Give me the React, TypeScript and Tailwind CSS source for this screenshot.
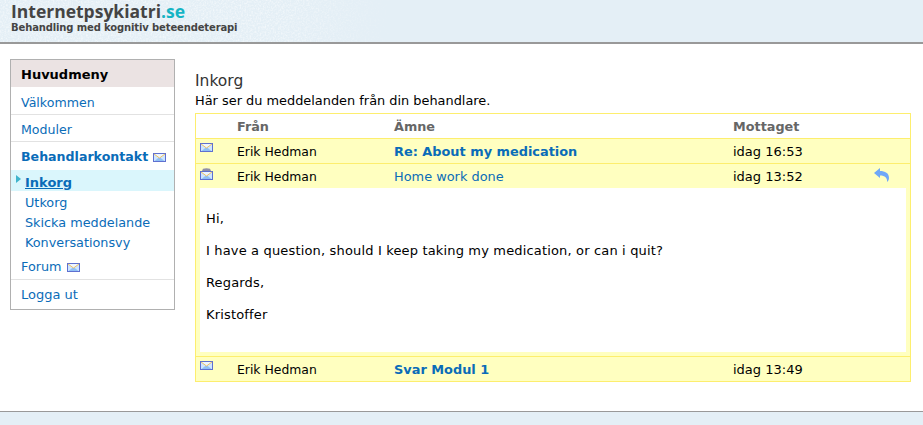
const font = { fontFamily: '"DejaVu Sans", Verdana, sans-serif' };
const linkColor = "text-[#0a6cb8]";

function Envelope({ opened }: { opened?: boolean }) {
  return (
    <svg width="13" height={opened ? 12 : 9} viewBox={opened ? "0 0 13 12" : "0 3 13 9"} className="block">
      {opened && <path d="M1.5 4 L3 0.8 Q6.5 -0.5 10 0.8 L11.5 4 Z" fill="#8f8fa8" />}
      <rect x="0.5" y="3.5" width="12" height="8" fill="#cfe6ff" stroke="#5f70d0" />
      <path d="M1.5 11 L6.5 7 L11.5 11 Z" fill="#8fc0f6" />
      <path d="M1 4 L6.5 8 L12 4" fill="#eef6ff" stroke="#f0bc50" strokeWidth="0.9" />
    </svg>
  );
}

function MailIcon() {
  return (
    <span className="ml-[5px] inline-block align-[-1px]">
      <Envelope />
    </span>
  );
}

function ReplyIcon() {
  return (
    <svg width="15" height="14" viewBox="0 0 15 14" className="-mt-[5px]">
      <path d="M0 5 L6 0 V3 C11 3 15 5 15 10 C15 12 14 13 13 14 C13.5 10 11 7.5 6 7.5 V10 Z" fill="#6fa8f8" />
    </svg>
  );
}

function SubLink({ children }: { children: React.ReactNode }) {
  return <div className={`h-[20px] pl-[14px] text-[12.8px] leading-[24px] ${linkColor}`}>{children}</div>;
}

function Row({ subject, time, bold, opened, reply }: { subject: string; time: string; bold?: boolean; opened?: boolean; reply?: boolean }) {
  return (
    <div className="grid h-[24px] grid-cols-[41px_157px_339px_1fr] bg-[#ffffc0] text-[13px] leading-[26px] text-black">
      <div className="pl-[4px] pt-[4px]">
        <Envelope opened={opened} />
      </div>
      <div className="text-[12.4px]">Erik Hedman</div>
      <div className={`text-[12.9px] ${linkColor} ${bold ? "font-bold" : ""}`}>{subject}</div>
      <div className="flex items-center justify-between pr-[21px]">
        <span>{time}</span>
        {reply && <ReplyIcon />}
      </div>
    </div>
  );
}

export default function App() {
  return (
    <div className="flex h-[425px] w-[923px] flex-col overflow-hidden bg-white" style={font}>
      {/* top banner */}
      <header className="relative h-[44px] border-b-[2px] border-[#999999] bg-[#e4eff6] pl-[11px]">
        <svg className="absolute left-0 top-0" width="400" height="42">
          <defs>
            <filter id="speckle">
              <feTurbulence type="fractalNoise" baseFrequency="0.6" numOctaves="2" seed="4" />
              <feColorMatrix values="0 0 0 0 1  0 0 0 0 1  0 0 0 0 1  2.2 0 0 0 -0.85" />
            </filter>
            <linearGradient id="fade">
              <stop offset="0%" stopColor="#fff" />
              <stop offset="70%" stopColor="#fff" />
              <stop offset="100%" stopColor="#000" />
            </linearGradient>
            <mask id="fadeMask">
              <rect width="400" height="42" fill="url(#fade)" />
            </mask>
          </defs>
          <g mask="url(#fadeMask)">
            <rect width="400" height="42" filter="url(#speckle)" opacity="0.55" />
          </g>
        </svg>
        <div className="relative">
          <div className="h-[22px] text-[17.5px] font-bold leading-[22px] text-[#444444]" style={{ fontFamily: '"Open Sans", sans-serif' }}>
            Internetpsykiatri<span className="text-[#16b4c4]">.se</span>
          </div>
          <div className="text-[10px] font-bold leading-[12px] tracking-[-0.13px] text-[#444444]">Behandling med kognitiv beteendeterapi</div>
        </div>
      </header>

      <main className="flex flex-1 items-start">
        {/* main menu */}
        <nav className="ml-[10px] mt-[15px] w-[165px] border border-[#b0b0b0]">
          <div className="h-[27px] bg-[#ebe3e3] pl-[10px] text-[13px] font-bold leading-[29px] text-black">Huvudmeny</div>
          <div className={`h-[28px] border-b border-[#e2e2e2] pl-[10px] text-[12.6px] leading-[32px] ${linkColor}`}>Välkommen</div>
          <div className={`h-[27px] border-b border-[#e2e2e2] pl-[10px] text-[12.6px] leading-[30px] ${linkColor}`}>Moduler</div>
          <div className={`h-[28px] pl-[10px] text-[12.6px] font-bold leading-[30px] ${linkColor}`}>
            Behandlarkontakt
            <MailIcon />
          </div>
          <div className={`relative h-[21px] bg-[#daf6fc] pl-[14px] text-[13px] font-bold leading-[26px] ${linkColor} underline`}>
            <span className="absolute left-[5px] top-[5px] h-0 w-0 border-y-[4px] border-l-[5px] border-y-transparent border-l-[#3fb4cc]" />
            Inkorg
          </div>
          <SubLink>Utkorg</SubLink>
          <SubLink>Skicka meddelande</SubLink>
          <SubLink>Konversationsvy</SubLink>
          <div className={`h-[29px] border-b border-[#e2e2e2] pl-[10px] text-[12.8px] leading-[32px] ${linkColor}`}>
            Forum
            <MailIcon />
          </div>
          <div className={`h-[29px] pl-[10px] text-[13px] leading-[29px] ${linkColor}`}>Logga ut</div>
        </nav>

        {/* inbox */}
        <section className="ml-[20px] mt-[27px] w-[716px]">
          <h1 className="text-[15.5px] font-normal leading-[20px] text-[#333333]">Inkorg</h1>
          <p className="mt-[1px] h-[21px] text-[12.9px] leading-[18px] text-black">Här ser du meddelanden från din behandlare.</p>
          <div className="border border-[#fdee6e]">
            <div className="grid h-[24px] grid-cols-[41px_157px_339px_1fr] text-[12.8px] font-bold leading-[26px] text-[#666666]">
              <div />
              <div>Från</div>
              <div>Ämne</div>
              <div>Mottaget</div>
            </div>
            <div className="border-t border-[#fdee6e]">
              <Row subject="Re: About my medication" time="idag 16:53" bold />
            </div>
            <div className="border-t border-[#fdee6e]">
              <Row subject="Home work done" time="idag 13:52" opened reply />
            </div>
            <div className="bg-[#ffffc0] px-[4px] pb-[4px]">
              <div className="h-[164px] bg-white py-[22px] pl-[6px] text-[13px] leading-[18px] tracking-[0.16px] text-black">
                <p>Hi,</p>
                <p className="mt-[14px]">I have a question, should I keep taking my medication, or can i quit?</p>
                <p className="mt-[14px]">Regards,</p>
                <p className="mt-[14px]">Kristoffer</p>
              </div>
            </div>
            <div className="border-t border-[#fdee6e]">
              <Row subject="Svar Modul 1" time="idag 13:49" bold />
            </div>
          </div>
        </section>
      </main>

      <footer className="h-[14px] border-t border-[#999999] bg-[#e4eff6]" />
    </div>
  );
}
